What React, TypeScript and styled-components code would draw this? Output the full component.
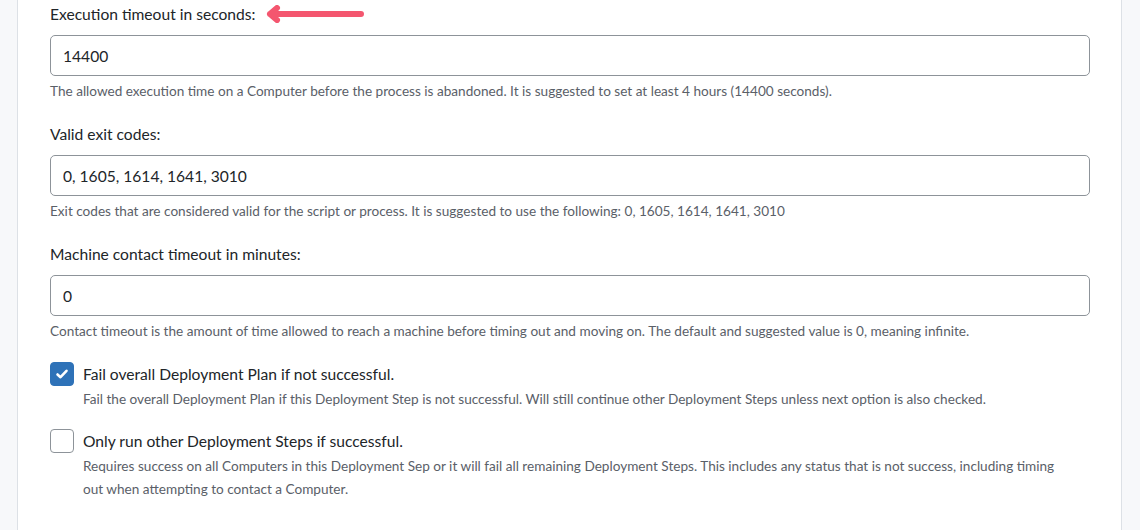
import React from "react"
import styled, { createGlobalStyle } from "styled-components"

const GlobalStyle = createGlobalStyle`
  html, body {
    margin: 0;
    padding: 0;
    background: #f7f8fa;
    font-family: "Lato", "Noto Sans", sans-serif;
    color: #212529;
  }
`

const Card = styled.div`
  margin: 0 17px;
  width: 1105px;
  min-height: 530px;
  box-sizing: border-box;
  background: #ffffff;
  border-left: 1px solid #dde1e6;
  border-right: 1px solid #dde1e6;
  padding: 3px 31px 0 32px;
`

const Field = styled.div`
  display: flex;
  flex-direction: column;
  margin-bottom: 20px;
`

const LabelRow = styled.div`
  display: flex;
  align-items: center;
  gap: 10px;
  height: 22px;
  margin-bottom: 10px;
`

const Label = styled.label`
  font-size: 15.6px;
  color: #212529;
`

const Input = styled.input`
  box-sizing: border-box;
  width: 1040px;
  height: 41px;
  border: 1px solid #8d9399;
  border-radius: 5px;
  padding: 0 12px;
  font-family: inherit;
  font-size: 15.6px;
  color: #212529;
  outline: none;
`

const Help = styled.div<{ $indent?: boolean }>`
  font-size: 13.6px;
  line-height: 23px;
  color: #5a6068;
  margin-top: 4px;
  padding-left: ${(p) => (p.$indent ? "33px" : "0")};
`

const CheckRow = styled.div`
  display: flex;
  align-items: center;
  gap: 9px;
  height: 24px;
`

const Box = styled.span<{ $checked?: boolean }>`
  box-sizing: border-box;
  width: 24px;
  height: 24px;
  border-radius: 4px;
  border: 1px solid ${(p) => (p.$checked ? "#2e72b8" : "#8d9399")};
  background: ${(p) => (p.$checked ? "#2e72b8" : "#ffffff")};
  display: flex;
  align-items: center;
  justify-content: center;
`

const CheckField = styled.div`
  display: flex;
  flex-direction: column;
  margin-bottom: 18px;
`

const CheckList = styled.div`
  margin-top: -1px;
`

const CheckHelp = styled(Help)`
  margin-top: 2px;
`

const Arrow = () => (
  <svg width="100" height="18" viewBox="0 0 100 18">
    <path
      d="M96 9 H5 M12 3 L5 9 L12 15"
      fill="none"
      stroke="#f4566f"
      strokeWidth="6"
      strokeLinecap="round"
      strokeLinejoin="round"
    />
  </svg>
)

const Check: React.FC<{ checked?: boolean; label: string; help: React.ReactNode }> = ({ checked, label, help }) => (
  <CheckField>
    <CheckRow>
      <Box $checked={checked}>
        {checked && (
          <svg width="14" height="14" viewBox="0 0 14 14">
            <path d="M2.5 7.5 L5.5 10.2 L11.5 3.8" fill="none" stroke="#fff" strokeWidth="2.6" strokeLinecap="round" strokeLinejoin="round" />
          </svg>
        )}
      </Box>
      <Label>{label}</Label>
    </CheckRow>
    <CheckHelp $indent>{help}</CheckHelp>
  </CheckField>
)

const App: React.FC = () => (
  <>
    <GlobalStyle />
    <Card>
      <Field>
        <LabelRow>
          <Label>Execution timeout in seconds:</Label>
          <Arrow />
        </LabelRow>
        <Input defaultValue="14400" />
        <Help>
          The allowed execution time on a Computer before the process is abandoned. It is suggested to set at least 4 hours (14400 seconds).
        </Help>
      </Field>
      <Field>
        <LabelRow>
          <Label>Valid exit codes:</Label>
        </LabelRow>
        <Input defaultValue="0, 1605, 1614, 1641, 3010" />
        <Help>
          Exit codes that are considered valid for the script or process. It is suggested to use the following: 0, 1605, 1614, 1641, 3010
        </Help>
      </Field>
      <Field>
        <LabelRow>
          <Label>Machine contact timeout in minutes:</Label>
        </LabelRow>
        <Input defaultValue="0" />
        <Help>
          Contact timeout is the amount of time allowed to reach a machine before timing out and moving on. The default and suggested value is 0, meaning infinite.
        </Help>
      </Field>
      <CheckList>
        <Check
          checked
          label="Fail overall Deployment Plan if not successful."
          help="Fail the overall Deployment Plan if this Deployment Step is not successful. Will still continue other Deployment Steps unless next option is also checked."
        />
        <Check
          label="Only run other Deployment Steps if successful."
          help={
            <>
              Requires success on all Computers in this Deployment Sep or it will fail all remaining Deployment Steps. This includes any status that is not success, including timing
              <br />
              out when attempting to contact a Computer.
            </>
          }
        />
      </CheckList>
    </Card>
  </>
)

export default App
